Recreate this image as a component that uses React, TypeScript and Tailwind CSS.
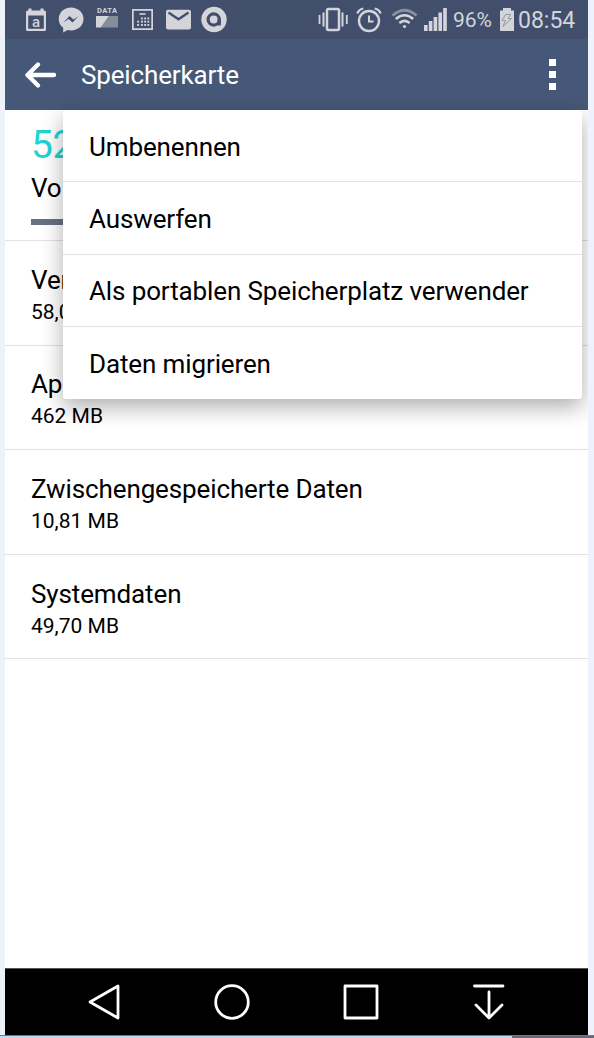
import type { ReactNode } from "react";

type StorageRow = {
  id: string;
  label: string;
  size: string;
};

const ROWS: StorageRow[] = [
  { id: "1", label: "Ver", size: "58,0" },
  { id: "2", label: "Ap", size: "462 MB" },
  { id: "3", label: "Zwischengespeicherte Daten", size: "10,81 MB" },
  { id: "4", label: "Systemdaten", size: "49,70 MB" },
];

const MENU_ITEMS = [
  "Umbenennen",
  "Auswerfen",
  "Als portablen Speicherplatz verwender",
  "Daten migrieren",
];

const KEYPAD_KEYS = [
  { y: 17.5, columns: [141, 144.2, 147.4] },
  { y: 20.7, columns: [137.2, 141, 144.2, 147.4] },
  { y: 24, columns: [137.2, 141, 144.2, 147.4] },
];
const SIGNAL_BARS = [6, 10, 14, 18.5, 23];

const NotificationIcons = () => (
  <svg className="h-[39px] w-[210px]" viewBox="20 0 210 39" fill="#d3d5da">
    {/* calendar */}
    <path d="M27.500 10.500h1V8.500h3v2h9v-2h3v2h1q1.500 0 1.500 1.500v17.500q0 1.500-1.500 1.500h-17q-1.500 0-1.500-1.500V12q0-1.500 1.500-1.500zM28.200 15.500v13.300h15.600V15.500z" fillRule="evenodd" />
    <text x="36" y="27" fontSize="15" fontWeight="500" textAnchor="middle" fontFamily="Roboto, sans-serif">
      a
    </text>
    {/* messenger */}
    <path d="M71 7.500c-7 0-12.300 5-12.300 11.500 0 3.600 1.700 6.700 4.500 8.800v4.700l4.400-2.500c1.100.3 2.200.5 3.400.5 7 0 12.500-5 12.500-11.500S78 7.500 71 7.500z" />
    <path d="M63.500 22.500l6-6.500 4 3.500 5-3.500-6 6.500-4-3.500z" fill="#414f6d" />
    {/* data counter */}
    <text x="97" y="12.700" fontSize="7.500" fontWeight="700" textLength="20" fontFamily="Roboto, sans-serif">
      DATA
    </text>
    <path d="M96 16h13l-8 11.500h-5z" />
    <path d="M109 16h9v11.500h-17z" fill="#858d9c" />
    {/* keypad */}
    <path d="M132 9h21v21h-21zM133.700 10.700v17.600h17.600v-17.600z" fillRule="evenodd" />
    <path d="M139.500 13.200h6v1.600h-6z" />
    {KEYPAD_KEYS.map(({ y, columns }) =>
      columns.map((x) => (
        <rect key={`${x}-${y}`} x={x} y={y} width="1.900" height="1.900" />
      )),
    )}
    {/* mail */}
    <rect x="166" y="9.700" width="25" height="19.800" rx="2" />
    <path d="M168.500 12.500l10 6.800 10-6.800" fill="none" stroke="#414f6d" strokeWidth="2.300" />
    {/* avast */}
    <circle cx="214" cy="19.500" r="12.700" />
    <circle cx="213.700" cy="19.500" r="5.600" fill="none" stroke="#414f6d" strokeWidth="3.200" />
    <path d="M219.300 19v6.500" fill="none" stroke="#414f6d" strokeWidth="3.200" />
  </svg>
);

const SystemIcons = () => (
  <svg className="h-[39px] w-[133px]" viewBox="317 0 133 39" fill="none" stroke="#d3d5da">
    {/* vibrate */}
    <rect x="327" y="9" width="12" height="21" rx="1.500" strokeWidth="2.500" />
    <path d="M323.500 12.500v14M342.500 12.500v14" strokeWidth="2" />
    <path d="M319.500 15v9M346.800 15v9" strokeWidth="1.800" />
    {/* alarm */}
    <circle cx="369" cy="21" r="10" strokeWidth="2.400" />
    <path d="M369 15.500v6h4.500" strokeWidth="2" />
    <path d="M357.300 13.500q1.500-4 6-5M380.700 13.500q-1.500-4-6-5" strokeWidth="2.200" />
    {/* wifi */}
    <path d="M392.500 15.500q12-10.500 24 0" stroke="#8a909e" strokeWidth="2.800" />
    <path d="M395.800 19q8.700-7.500 17.400 0M399.300 23q5.200-4.400 10.400 0" strokeWidth="2.600" />
    <circle cx="404.500" cy="26.500" r="1.600" fill="#d3d5da" stroke="none" />
    {SIGNAL_BARS.map((height, index) => (
      <rect
        key={height}
        x={424 + index * 4.8}
        y={31 - height}
        width="3.600"
        height={height}
        fill="#d3d5da"
        stroke="none"
      />
    ))}
  </svg>
);

const BatteryIcon = () => (
  <svg className="h-[39px] w-3.5" viewBox="500 0 14 39">
    <path d="M500 10.500h3V8h8v2.500h3V31h-14z" fill="#d3d5da" />
    <path d="M505.500 14.500h5l-2.500 4h3.500l-8.500 8 2.500-6h-3.500z" fill="none" stroke="#929aa8" />
  </svg>
);

const NavIcon = ({ children }: { children: ReactNode }) => (
  <svg
    className="h-9 w-9"
    viewBox="0 0 36 36"
    fill="none"
    stroke="white"
    strokeWidth="2.8"
    strokeLinejoin="round"
    strokeLinecap="round"
  >
    {children}
  </svg>
);

const StatusBar = () => (
  <div className="flex h-[39px] bg-[#414f6d] pl-[15px] leading-[39px] text-[#d3d5da]">
    <NotificationIcons />
    <div className="ml-[87px] flex">
      <SystemIcons />
      <span className="ml-[3px] w-[47px] text-[21px] leading-[41px]">96%</span>
      <BatteryIcon />
      <span className="ml-1 text-[23px] leading-[41px]">08:54</span>
    </div>
  </div>
);

const OverflowMenu = () => (
  <div className="absolute top-[110px] left-[58px] w-[518.500px] rounded-[3px] bg-white shadow-[0_8px_22px_rgba(0,0,0,0.32)]">
    {MENU_ITEMS.map((item, index) => (
      <div
        key={item}
        className={`flex items-center pt-[3px] pl-[26px] text-[26px] tracking-[-0.12px] whitespace-nowrap ${
          index !== MENU_ITEMS.length - 1
            ? "h-[72.250px] border-b border-b-[#e2e2e2]"
            : "h-[71.750px]"
        }`}
      >
        {item}
      </div>
    ))}
  </div>
);

const App = () => {
  return (
    <div className="h-[1038px] w-[594px] overflow-hidden bg-[#edf2fb] font-['Roboto',sans-serif] text-black">
      <div className="relative ml-[5px] flex h-[1035px] w-[583px] flex-col overflow-hidden bg-white">
        <StatusBar />
        <header className="flex h-[71px] items-center bg-[#465878] text-white">
          <svg className="ml-[19px] h-8 w-8" viewBox="0 0 32 32" fill="none" stroke="white" strokeWidth="4.3" strokeLinecap="round" strokeLinejoin="round">
            <path d="M14 5.500L3.500 16 14 26.500M4 16h26" />
          </svg>
          <h1 className="ml-[25px] pt-0.5 text-[26px] tracking-[-0.15px]">Speicherkarte</h1>
          <div className="mr-8 ml-auto flex flex-col gap-[5px]">
            <span className="h-[7px] w-[7px] bg-white" />
            <span className="h-[7px] w-[7px] bg-white" />
            <span className="h-[7px] w-[7px] bg-white" />
          </div>
        </header>
        <main className="flex-1">
          <div className="h-[131px] border-b border-b-[#e2e2e2] px-[26px] pt-[13px]">
            <p className="text-[39px] leading-[44px] tracking-[-0.5px] text-[#22d3d3]">52</p>
            <p className="mt-1 text-[26px] leading-[34px] tracking-[-0.12px]">Vo</p>
            <div className="mt-[13.500px] h-1.5 bg-[#69717f]" />
          </div>
          {ROWS.map((row) => (
            <div
              key={row.id}
              className="h-[104.600px] border-b border-b-[#e2e2e2] pt-[21.750px] pl-[26px]"
            >
              <p className="text-[26px] leading-[34px] tracking-[-0.12px]">{row.label}</p>
              <p className="text-[21px] leading-[30px]">{row.size}</p>
            </div>
          ))}
        </main>
        <nav className="flex h-[67px] items-center gap-[92.300px] border-t border-t-[#555555] bg-black pl-[81px]">
          <NavIcon>
            <path d="M32 2v32L4 18z" />
          </NavIcon>
          <NavIcon>
            <circle cx="18" cy="18" r="16.300" />
          </NavIcon>
          <NavIcon>
            <path d="M2 2h32v32H2z" />
          </NavIcon>
          <NavIcon>
            <path d="M3.500 2h28.500M18 8v25M5 21l13 13 13-13" />
          </NavIcon>
        </nav>
        <OverflowMenu />
      </div>
      <div className="flex h-[3px] border-t border-t-[#6f7785] bg-[#c1daf2]">
        <div className="ml-auto w-[82px] bg-[#696775]" />
      </div>
    </div>
  );
};

export default App;
